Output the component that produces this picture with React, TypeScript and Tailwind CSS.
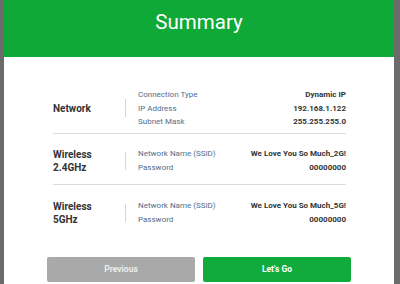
const rows = [
  {
    name: ["Network"],
    pt: "pt-[31px]",
    pb: "pb-[4px]",
    lh: "leading-[13.5px]",
    items: [
      { label: "Connection Type", value: "Dynamic IP" },
      { label: "IP Address", value: "192.168.1.122" },
      { label: "Subnet Mask", value: "255.255.255.0" },
    ],
  },
  {
    name: ["Wireless", "2.4GHz"],
    pt: "pt-[13px]",
    pb: "pb-[9px]",
    lh: "leading-[14px]",
    items: [
      { label: "Network Name (SSID)", value: "We Love You So Much_2G!" },
      { label: "Password", value: "00000000" },
    ],
  },
  {
    name: ["Wireless", "5GHz"],
    pt: "pt-[14px]",
    pb: "pb-0",
    lh: "leading-[14px]",
    items: [
      { label: "Network Name (SSID)", value: "We Love You So Much_5G!" },
      { label: "Password", value: "00000000" },
    ],
  },
];

export default function App() {
  return (
    <div
      className="flex h-[284px] w-[400px] overflow-hidden bg-[#6b6b6b]"
      style={{ fontFamily: "Roboto, 'Liberation Sans', sans-serif" }}
    >
      <div className="w-[4px] shrink-0 bg-[#6b6b6b]" />
      <div className="flex w-[390px] shrink-0 flex-col bg-white">
        <div className="flex h-[57px] items-start justify-center bg-[#0fa938] pt-[7px]">
          <h1 className="text-[20.5px] leading-[30px] text-white">Summary</h1>
        </div>

        <div className="pl-[49px] pr-[48px]">
          {rows.map((r, i) => (
            <div
              key={i}
              className={`flex items-center ${r.pt} ${r.pb} ${
                i < rows.length - 1 ? "border-b border-[#dcdcdc]" : ""
              }`}
            >
              <div className="w-[72px] shrink-0 text-[10px] font-bold leading-[13px] text-[#333]">
                {r.name.map((n) => (
                  <div key={n}>{n}</div>
                ))}
              </div>
              <div className="h-[18px] w-px shrink-0 bg-[#d6d6d6]" />
              <div className={`flex-1 pl-[12px] text-[8px] ${r.lh}`}>
                {r.items.map((it) => (
                  <div key={it.label} className="flex justify-between">
                    <span className="text-[#4f6e8e]">{it.label}</span>
                    <span className="font-bold text-[#333]">{it.value}</span>
                  </div>
                ))}
              </div>
            </div>
          ))}
        </div>

        <div className="mt-[30px] flex gap-[8px] px-[43px]">
          <button className="h-[25px] flex-1 rounded-[2px] bg-[#a9a9a9] text-[8.5px] font-bold text-[#ececec]">
            Previous
          </button>
          <button className="h-[25px] flex-1 rounded-[2px] bg-[#10ab3a] text-[8.5px] font-bold text-white">
            Let's Go
          </button>
        </div>
      </div>
      <div className="flex-1 bg-[#6b6b6b]" />
    </div>
  );
}
